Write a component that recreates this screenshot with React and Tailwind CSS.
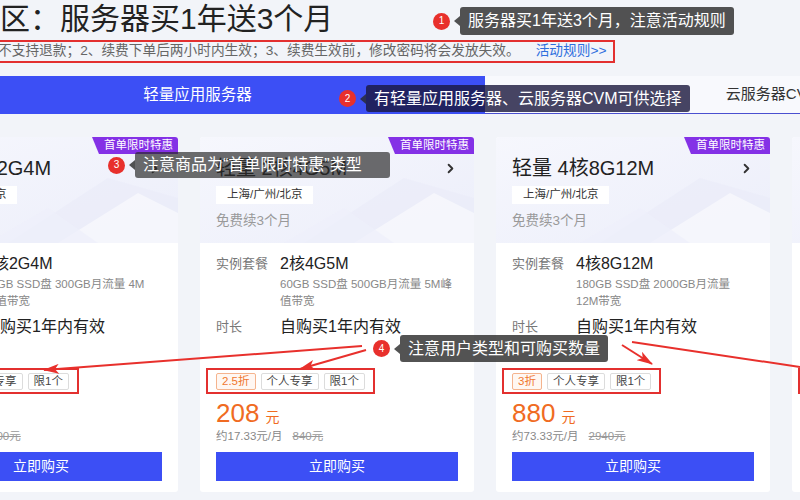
import { ChevronRight } from "lucide-react";

const cards = [
  {
    name: "轻量 2核2G4M",
    plan: "2核2G4M",
    spec: ["40GB SSD盘 300GB月流量 4M", "峰值带宽"],
    discount: "2.5折",
    price: "99",
    monthly: "约8.25元/月",
    original: "800元",
  },
  {
    name: "轻量 2核4G5M",
    plan: "2核4G5M",
    spec: ["60GB SSD盘 500GB月流量 5M峰", "值带宽"],
    discount: "2.5折",
    price: "208",
    monthly: "约17.33元/月",
    original: "840元",
  },
  {
    name: "轻量 4核8G12M",
    plan: "4核8G12M",
    spec: ["180GB SSD盘 2000GB月流量", "12M带宽"],
    discount: "3折",
    price: "880",
    monthly: "约73.33元/月",
    original: "2940元",
  },
  {
    name: "轻量 8核16G18M",
    plan: "8核16G18M",
    spec: ["270GB SSD盘 3500GB月流量", "18M带宽"],
    discount: "3折",
    price: "2200",
    monthly: "约183.33元/月",
    original: "7340元",
  },
];

// faint glass shapes in the card header
const Deco = () => (
  <svg className="absolute right-0 bottom-0" width="190" height="75" viewBox="0 0 190 75">
    <polygon points="20,75 120,10 190,30 190,75" fill="#e9ebf9" opacity="0.6" />
    <polygon points="70,75 150,25 190,45 190,75" fill="#ffffff" opacity="0.5" />
    <polygon points="0,75 60,40 110,75" fill="#eef0fb" opacity="0.7" />
  </svg>
);

const Card = ({ card }) => (
  <div className="relative w-[274px] h-[355px] shrink-0 bg-white rounded-[3px] overflow-hidden">
    <div className="relative h-[106px] px-4 pt-[17px] bg-gradient-to-br from-[#f6f7fd] to-[#eceefa]">
      <Deco />
      <div className="absolute top-0 right-0 h-[17px] pl-[12px] pr-[5px] bg-[#8431e6] text-white text-[11.5px] leading-[17px] rounded-bl-[5px] [clip-path:polygon(0_0,100%_0,100%_100%,7px_100%)]">
        首单限时特惠
      </div>
      <div className="relative flex items-center justify-between h-[28px]">
        <span className="text-[20px] text-[#222] whitespace-nowrap">{card.name}</span>
        <ChevronRight size={15} strokeWidth={3} className="text-[#333]" />
      </div>
      <div className="relative mt-[4px] flex w-fit h-[18px] items-center px-[11px] bg-white text-[11.5px] text-[#333]">
        上海/广州/北京
      </div>
      <div className="relative mt-[8px] text-[13.5px] leading-[18px] text-[#999]">免费续3个月</div>
    </div>

    <div className="px-4 pt-[10px]">
      <div className="flex">
        <span className="w-[64px] shrink-0 text-[13px] leading-[22px] text-[#777]">实例套餐</span>
        <div>
          <div className="text-[16px] leading-[22px] text-[#222]">{card.plan}</div>
          <div className="mt-[1px] text-[11.5px] leading-[17px] text-[#888] whitespace-nowrap">
            {card.spec.map((line) => (
              <div key={line}>{line}</div>
            ))}
          </div>
        </div>
      </div>
      <div className="mt-[6px] flex">
        <span className="w-[64px] shrink-0 text-[13px] leading-[22px] text-[#777]">时长</span>
        <span className="text-[16px] leading-[22px] text-[#222]">自购买1年内有效</span>
      </div>

      <div className="relative mt-[35px] flex w-fit gap-[5px]">
        <span className="h-[17px] px-[5px] border border-[#f5b48e] bg-[#fff7f2] text-[11.5px] leading-[15px] text-[#f0772f] rounded-[2px]">
          {card.discount}
        </span>
        <span className="h-[17px] px-[5px] border border-[#dcdcdc] text-[11.5px] leading-[15px] text-[#444] rounded-[2px]">
          个人专享
        </span>
        <span className="h-[17px] px-[5px] border border-[#dcdcdc] text-[11.5px] leading-[15px] text-[#444] rounded-[2px]">
          限1个
        </span>
        <div className="absolute -top-[5px] -bottom-[4px] -left-[10px] -right-[10px] border-2 border-[#e3302f]"></div>
      </div>

      <div className="mt-[8px] flex items-baseline h-[30px] text-[#f06b22]">
        <span className="text-[26px] leading-[30px]">{card.price}</span>
        <span className="ml-[6px] text-[14px]">元</span>
      </div>
      <div className="flex text-[11.5px] leading-[16px] text-[#888] whitespace-nowrap">
        <span>{card.monthly}</span>
        <span className="ml-[10px] line-through text-[#999]">{card.original}</span>
      </div>
      <button className="mt-[8px] w-full h-[29px] bg-[#3c4ff5] text-white text-[14px]">立即购买</button>
    </div>
  </div>
);

const Dot = ({ n }) => (
  <span className="flex w-[17px] h-[17px] shrink-0 items-center justify-center rounded-full bg-[#e8302c] text-white text-[10px] leading-none">
    {n}
  </span>
);

const Pointer = () => (
  <span className="ml-[4px] w-0 h-0 border-y-[5px] border-y-transparent border-r-[6px] border-r-[rgba(40,40,40,0.8)]"></span>
);

export default function App() {
  return (
    <div className="relative w-[800px] h-[500px] overflow-hidden bg-[#f2f4f9] font-['Liberation_Sans','Noto_Sans_CJK_SC',sans-serif]">
      <div className="h-[38px] text-[30px] leading-[38px] text-[#222] whitespace-nowrap">区：服务器买1年送3个月</div>

      <div className="mt-[2px] -ml-[4px] w-[619px] h-[23px] flex items-center border-2 border-[#e3302f] text-[13.7px] text-[#666] whitespace-nowrap">
        <span>不支持退款；2、续费下单后两小时内生效；3、续费生效前，修改密码将会发放失效。</span>
        <span className="ml-[16px] text-[#2f6fde]">活动规则&gt;&gt;</span>
      </div>

      <div className="mt-[13px] -ml-[90px] flex w-[1150px] h-[38px]">
        <div className="w-[575px] flex items-center justify-center bg-[#3c4ff5] text-white text-[15.5px]">轻量应用服务器</div>
        <div className="w-[575px] flex items-center justify-center bg-[#f8f9fd] border-b border-[#4a4fd0] text-[15px] text-[#333]">
          云服务器CVM
        </div>
      </div>

      <div className="mt-[23px] -ml-[96px] flex gap-[22px]">
        {cards.map((card) => (
          <Card key={card.name} card={card} />
        ))}
      </div>

      {/* annotations */}
      <svg className="absolute inset-0 pointer-events-none" width="800" height="500">
        <defs>
          <marker id="ah" markerUnits="userSpaceOnUse" markerWidth="16" markerHeight="10" refX="15" refY="5" orient="auto">
            <path d="M0,0 L16,5 L0,10 L4,5 z" fill="#e8302c" />
          </marker>
        </defs>
        <g stroke="#e8302c" strokeWidth="2" fill="none">
          <line x1="362" y1="346" x2="44" y2="370" markerEnd="url(#ah)" />
          <line x1="366" y1="350" x2="300" y2="369" markerEnd="url(#ah)" />
          <line x1="622" y1="345" x2="652" y2="364" markerEnd="url(#ah)" />
          <line x1="632" y1="342" x2="800" y2="367" />
        </g>
      </svg>

      <div className="absolute left-[433px] top-[7px] flex items-center h-[28px]">
        <Dot n="1" />
        <Pointer />
        <div className="h-[28px] px-[8px] flex items-center rounded-[3px] bg-[rgba(40,40,40,0.8)] text-white text-[16px] whitespace-nowrap">
          服务器买1年送3个月，注意活动规则
        </div>
      </div>

      <div className="absolute left-[339px] top-[85px] flex items-center h-[27px]">
        <Dot n="2" />
        <Pointer />
        <div className="h-[27px] px-[8px] flex items-center rounded-[3px] bg-[rgba(25,22,60,0.8)] text-white text-[16px] whitespace-nowrap">
          有轻量应用服务器、云服务器CVM可供选择
        </div>
      </div>

      <div className="absolute left-[108px] top-[152px] flex items-center h-[26px]">
        <Dot n="3" />
        <Pointer />
        <div className="w-[255px] h-[26px] px-[8px] flex items-center rounded-[3px] bg-[rgba(40,40,40,0.68)] text-white text-[16px] whitespace-nowrap">
          注意商品为“首单限时特惠”类型
        </div>
      </div>

      <div className="absolute left-[373px] top-[335px] flex items-center h-[27px]">
        <Dot n="4" />
        <Pointer />
        <div className="h-[27px] px-[8px] flex items-center rounded-[3px] bg-[rgba(40,40,40,0.8)] text-white text-[16px] whitespace-nowrap">
          注意用户类型和可购买数量
        </div>
      </div>
    </div>
  );
}
